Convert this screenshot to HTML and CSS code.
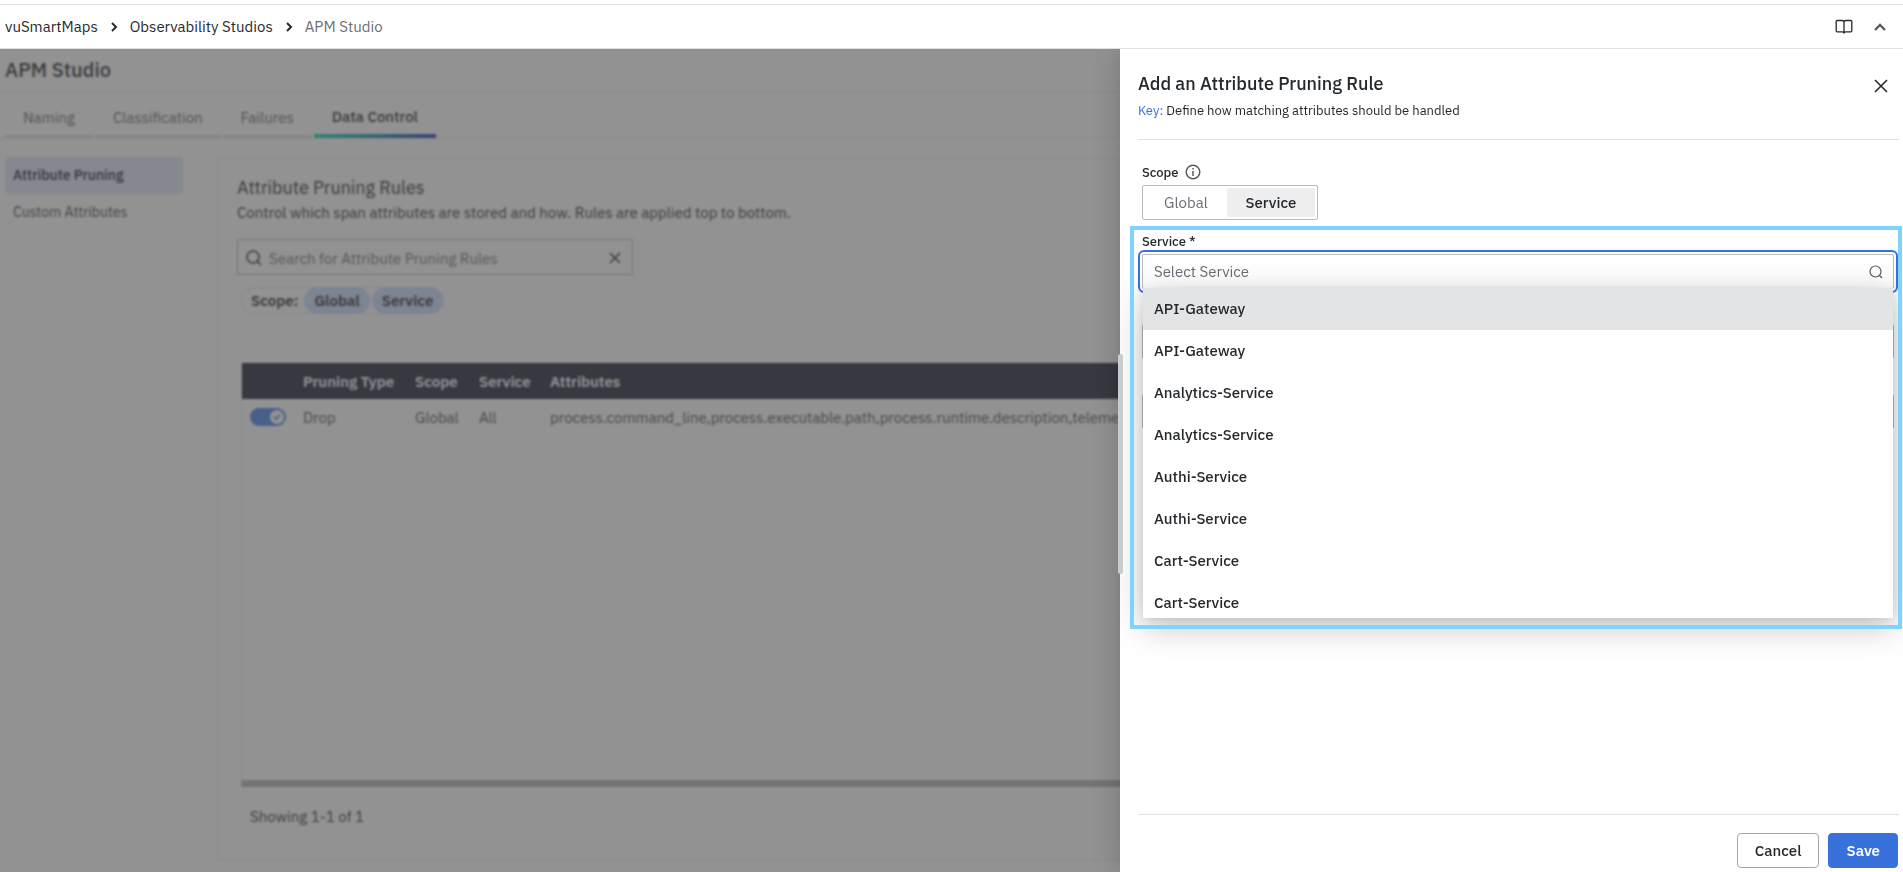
FILE: index.html
```html
<!DOCTYPE html>
<html lang="en">
<head>
  <meta charset="UTF-8" />
  <meta name="viewport" content="width=device-width, initial-scale=1.0" />
  <title>APM Studio - vuSmartMaps</title>
  <link rel="stylesheet" href="styles.css">
</head>
<body>
  <header class="topbar">
    <nav class="breadcrumbs" aria-label="Breadcrumb">
      <a href="#">vuSmartMaps</a>
      <svg width="8" height="12" viewBox="0 0 8 12"><path d="M2 2l4 4-4 4" /></svg>
      <a href="#">Observability Studios</a>
      <svg width="8" height="12" viewBox="0 0 8 12"><path d="M2 2l4 4-4 4" /></svg>
      <span class="current">APM Studio</span>
    </nav>
    <div class="topbar-actions">
      <button class="icon-btn" aria-label="Documentation">
        <svg width="18" height="16" viewBox="0 0 18 16"><path d="M9 3.2C9 2 8 1.500 7 1.500H2.200c-.6 0-1 .4-1 1v9.300c0 .6.4 1 1 1H7c1.200 0 2 .6 2 1.800 0-1.200.8-1.800 2-1.800h4.800c.6 0 1-.4 1-1V2.500c0-.6-.4-1-1-1H11c-1 0-2 .5-2 1.700zM9 3v11.500" /></svg>
      </button>
      <button class="icon-btn chevron" aria-label="Collapse">
        <svg width="14" height="10" viewBox="0 0 14 10"><path d="M2 8l5-5 5 5" /></svg>
      </button>
    </div>
  </header>

  <div class="workspace">
    <main class="page">
      <h1 class="page-title">APM Studio</h1>
      <div class="tabs" role="tablist">
        <button class="tab" role="tab">Naming</button>
        <button class="tab" role="tab">Classification</button>
        <button class="tab" role="tab">Failures</button>
        <button class="tab active" role="tab" aria-selected="true">Data Control</button>
      </div>
      <div class="content">
        <nav class="side-nav">
          <a href="#" class="active">Attribute Pruning</a>
          <a href="#">Custom Attributes</a>
        </nav>
        <section class="card">
          <h2>Attribute Pruning Rules</h2>
          <p class="card-text">Control which span attributes are stored and how. Rules are applied top to bottom.</p>
          <div class="search">
            <svg width="16" height="16" viewBox="0 0 16 16"><circle cx="7" cy="7" r="6" /><path d="M11.500 11.500L15 15" /></svg>
            <input type="text" aria-label="Search rules" placeholder="Search for Attribute Pruning Rules">
            <button class="icon-btn" aria-label="Clear search">
              <svg width="14" height="14" viewBox="0 0 14 14"><path d="M2 2l10 10M12 2L2 12" /></svg>
            </button>
          </div>
          <div class="scope-filter">
            <span class="scope-label">Scope:</span>
            <button class="chip">Global</button>
            <button class="chip">Service</button>
          </div>
          <div class="table-wrap">
            <table class="rules">
              <colgroup>
                <col class="col-toggle">
                <col class="col-type">
                <col class="col-scope">
                <col class="col-service">
                <col>
              </colgroup>
              <thead>
                <tr><th></th><th>Pruning Type</th><th>Scope</th><th>Service</th><th>Attributes</th></tr>
              </thead>
              <tbody>
                <tr>
                  <td>
                    <label class="switch">
                      <input type="checkbox" checked aria-label="Enable rule">
                      <span class="knob"><svg width="8" height="8" viewBox="0 0 8 8"><path d="M1 4l2 2 4-4" /></svg></span>
                    </label>
                  </td>
                  <td>Drop</td>
                  <td>Global</td>
                  <td>All</td>
                  <td>process.command_line,process.executable.path,process.runtime.description,telemetry.sdk.name</td>
                </tr>
              </tbody>
            </table>
          </div>
          <p class="showing">Showing 1-1 of 1</p>
        </section>
      </div>
    </main>

    <div class="overlay"></div>

    <aside class="drawer" role="dialog" aria-labelledby="drawer-title">
      <div class="drawer-handle"></div>
      <div class="drawer-head">
        <div>
          <h2 id="drawer-title">Add an Attribute Pruning Rule</h2>
          <p><a href="#">Key:</a> Define how matching attributes should be handled</p>
        </div>
        <button class="icon-btn close" aria-label="Close">
          <svg width="14" height="14" viewBox="0 0 14 14"><path d="M1 1l12 12M13 1L1 13" /></svg>
        </button>
      </div>

      <form class="drawer-body">
        <div class="field-label">
          <span>Scope</span>
          <svg width="16" height="16" viewBox="0 0 16 16"><circle cx="8" cy="8" r="6.800" /><path d="M8 7v5M8 4v1.500" /></svg>
        </div>
        <div class="segmented">
          <button type="button">Global</button>
          <button type="button" class="selected">Service</button>
        </div>

        <div class="service-field">
          <label class="field-label" for="service">Service *</label>
          <div class="select-box">
            <input id="service" type="text" role="combobox" aria-expanded="true" aria-controls="service-list" placeholder="Select Service">
            <svg width="14" height="14" viewBox="0 0 14 14"><circle cx="6.500" cy="6.500" r="5.500" /><path d="M10.500 10.500L13 13" /></svg>
          </div>
          <ul class="options" id="service-list" role="listbox">
            <li role="option" class="focused">API-Gateway</li>
            <li role="option">API-Gateway</li>
            <li role="option">Analytics-Service</li>
            <li role="option">Analytics-Service</li>
            <li role="option">Authi-Service</li>
            <li role="option">Authi-Service</li>
            <li role="option">Cart-Service</li>
            <li role="option">Cart-Service</li>
          </ul>
          <div class="highlight"></div>
        </div>
        <input class="text-field" type="text" aria-label="Attributes">
        <input class="text-field" type="text" aria-label="Pruning type">
      </form>

      <div class="drawer-foot">
        <button class="btn">Cancel</button>
        <button class="btn primary">Save</button>
      </div>
    </aside>
  </div>
</body>
</html>
```

FILE: styles.css
```css
* {
  box-sizing: border-box;
}
body {
  margin: 0;
  height: 100vh;
  display: flex;
  flex-direction: column;
  overflow: hidden;
  padding-top: 4px;
  background: #fff;
  color: #24292e;
  font-family: "IBM Plex Sans", "Noto Sans", sans-serif;
  font-size: 15px;
}
h1, h2, p, ul {
  margin: 0;
  padding: 0;
}
a {
  color: inherit;
  text-decoration: none;
}
button, input {
  font: inherit;
  color: inherit;
}
button {
  border: none;
  background: none;
  padding: 0;
  cursor: pointer;
}
svg {
  display: block;
  flex-shrink: 0;
  fill: none;
  stroke: currentColor;
  stroke-width: 1.5;
}

/* top bar */
.topbar {
  display: flex;
  justify-content: space-between;
  align-items: center;
  height: 45px;
  flex-shrink: 0;
  padding: 0 16px 0 5px;
  border-top: 1px solid #dfe1e2;
  border-bottom: 1px solid #dfe1e2;
}
.breadcrumbs {
  display: flex;
  align-items: center;
  gap: 12px;
}
.breadcrumbs svg {
  stroke-width: 2;
}
.breadcrumbs .current {
  color: #6b6f75;
}
.topbar-actions {
  display: flex;
  align-items: center;
  gap: 20px;
}
.topbar-actions svg {
  stroke-width: 1.3;
}
.topbar-actions .chevron svg {
  stroke-width: 2.4;
  color: #585c60;
}

/* page behind the drawer */
.workspace {
  position: relative;
  flex: 1;
  min-height: 0;
  overflow: hidden;
}
.page {
  display: flex;
  flex-direction: column;
  height: 100%;
}
.page-title {
  padding: 0 5px;
  font-size: 20px;
  font-weight: 500;
  line-height: 42px;
  border-bottom: 1px solid #ebebeb;
}
.tabs {
  display: flex;
  gap: 2px;
  padding: 7px 5px 0;
  border-bottom: 1px solid #ebebeb;
}
.tab {
  height: 39px;
  padding: 0 18px;
  color: #5f6368;
  border-bottom: 3px solid #dcdcdc;
}
.tab.active {
  color: #24292e;
  font-weight: 500;
  border-bottom-width: 4px;
  border-image: linear-gradient(90deg, #08e0b4, #2837b8) 1;
}
.content {
  flex: 1;
  display: flex;
  gap: 35px;
  padding: 18px 0 12px 5px;
}
.side-nav {
  width: 178px;
  flex-shrink: 0;
  font-size: 14px;
}
.side-nav a {
  display: block;
  padding: 0 8px;
  line-height: 37px;
  border-radius: 3px;
  color: #3c4045;
}
.side-nav a.active {
  background: #dfe6f8;
  color: #16191d;
  font-weight: 500;
}
.card {
  flex: 1;
  min-width: 0;
  display: flex;
  flex-direction: column;
  padding: 17px 18px 26px;
  border: 1px solid #e8e8e8;
}
.card h2 {
  font-size: 18px;
  font-weight: 400;
  line-height: 25px;
}
.card-text {
  line-height: 25px;
}
.search {
  display: flex;
  align-items: center;
  gap: 5px;
  width: 396px;
  height: 36px;
  margin-top: 14px;
  padding: 2px 10px 0 8px;
  border: 1px solid #b2b6ba;
  color: #24292e;
}
.search input {
  flex: 1;
  border: none;
  outline: none;
  background: none;
}
.search input::placeholder {
  color: #6b6f75;
}
.scope-filter {
  display: flex;
  align-items: center;
  gap: 2px;
  align-self: flex-start;
  height: 27px;
  margin: 12px 0 0 4px;
  padding-left: 9px;
  border: 1px solid #e4e4e4;
  border-radius: 14px;
  font-weight: 600;
}
.scope-label {
  margin-right: 4px;
}
.chip {
  height: 27px;
  padding: 0 10px;
  border-radius: 14px;
  background: #cadcff;
  font-weight: 600;
}
.table-wrap {
  flex: 1;
  margin: 49px 0 0 4px;
  overflow: hidden;
  border-left: 1px solid #e8e8e8;
  border-bottom: 7px solid #b2b2b2;
}
.rules {
  width: 100%;
  table-layout: fixed;
  border-collapse: collapse;
  text-align: left;
}
.rules .col-toggle { width: 53px; }
.rules .col-type { width: 112px; }
.rules .col-scope { width: 64px; }
.rules .col-service { width: 71px; }
.rules th {
  height: 36px;
  padding: 0 8px;
  background: #1c2034;
  color: #fff;
  font-weight: 600;
}
.rules td {
  height: 36px;
  padding: 0 8px;
  color: #44484c;
  white-space: nowrap;
}
.switch {
  display: flex;
  justify-content: flex-end;
  align-items: center;
  width: 36px;
  height: 18px;
  padding: 2px;
  border-radius: 9px;
  background: #4a80f0;
}
.switch input {
  appearance: none;
  width: 0;
  height: 0;
  margin: 0;
}
.knob {
  display: flex;
  align-items: center;
  justify-content: center;
  width: 14px;
  height: 14px;
  border-radius: 50%;
  background: #fff;
  color: #3871dc;
}
.showing {
  padding: 20px 13px 6px;
  line-height: 20px;
}

.overlay {
  position: absolute;
  inset: 0;
  background: rgba(73, 73, 73, 0.6);
  backdrop-filter: blur(1px);
}

/* drawer */
.drawer {
  position: absolute;
  top: 0;
  right: 0;
  bottom: 0;
  width: 41.15%;
  display: flex;
  flex-direction: column;
  padding: 0 4px 4px 18px;
  background: #fff;
  box-shadow: 0 0 28px rgba(0, 0, 0, 0.2);
}
.drawer-handle {
  position: absolute;
  left: -2px;
  top: 305px;
  width: 5px;
  height: 220px;
  border-radius: 3px;
  background: #cfd1d1;
}
.drawer-head {
  display: flex;
  justify-content: space-between;
  align-items: flex-start;
  padding: 22px 11px 14px 0;
  border-bottom: 1px solid #dfe1e2;
}
.drawer-head h2 {
  font-size: 18px;
  font-weight: 500;
  line-height: 26px;
}
.drawer-head p {
  font-size: 13px;
  line-height: 28px;
}
.drawer-head p a {
  color: #3871dc;
}
.close {
  padding-top: 8px;
}
.close svg {
  stroke-width: 1.6;
}
.drawer-body {
  flex: 1;
  padding: 22px 5px 0 4px;
}
.field-label {
  display: flex;
  align-items: center;
  gap: 7px;
  height: 20px;
  font-size: 13px;
  font-weight: 500;
}
.field-label svg {
  color: #585c60;
}
.segmented {
  display: inline-flex;
  height: 35px;
  margin-top: 3px;
  padding: 2px;
  border: 1px solid #b9bbbe;
  border-radius: 2px;
}
.segmented button {
  min-width: 82px;
  padding: 0 17px;
  border-radius: 2px;
  color: #6b6f75;
}
.segmented .selected {
  min-width: 88px;
  background: #eee;
  color: #24292e;
  font-weight: 500;
}
.service-field {
  position: relative;
  margin-top: 11px;
}
.select-box {
  display: flex;
  align-items: center;
  height: 35px;
  margin-top: 3px;
  padding: 0 10px 0 11px;
  border: 1px solid #b9bbbe;
  border-radius: 2px;
  outline: 2px solid #3871dc;
  outline-offset: 2px;
}
.select-box input {
  flex: 1;
  padding: 0;
  border: none;
  outline: none;
  background: none;
}
.select-box input::placeholder {
  color: #6b6f75;
}
.select-box svg {
  color: #585c60;
  stroke-width: 1.2;
}
.options {
  position: absolute;
  z-index: 1;
  top: 57px;
  left: 1px;
  right: 1px;
  height: 330px;
  overflow: hidden;
  list-style: none;
  background: #fff;
  box-shadow: 0 8px 32px rgba(0, 0, 0, 0.25), 0 2px 10px rgba(0, 0, 0, 0.08);
}
.options li {
  height: 42px;
  padding: 0 11px;
  line-height: 42px;
  font-weight: 500;
}
.options .focused {
  background: #e2e4e6;
}
.highlight {
  position: absolute;
  z-index: 2;
  top: -5px;
  left: -12px;
  right: -8px;
  height: 403px;
  border: 4px solid #7fd4ff;
  pointer-events: none;
}
.text-field {
  display: block;
  width: 100%;
  height: 35px;
  margin-top: 35px;
  border: 1px solid #b9bbbe;
  border-radius: 2px;
}
.drawer-foot {
  display: flex;
  justify-content: flex-end;
  gap: 9px;
  padding: 18px 1px 0 0;
  border-top: 1px solid #dfe1e2;
}
.btn {
  height: 35px;
  padding: 0 17px;
  border: 1px solid #a4a7aa;
  border-radius: 4px;
  font-weight: 500;
}
.btn.primary {
  border-color: #3871dc;
  background: #3871dc;
  color: #fff;
  font-weight: 600;
}
```
